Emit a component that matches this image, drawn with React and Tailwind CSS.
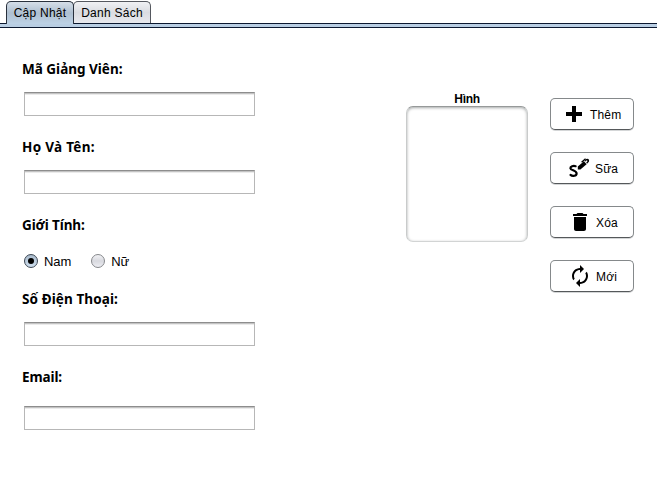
import React from "react";
import { MdDelete, MdAutorenew } from "react-icons/md";

const labelFont = "font-['Noto_Sans','Open_Sans',sans-serif]";

function Label({ children, className = "" }) {
  return (
    <div className={`h-5 whitespace-nowrap pl-[22px] text-[13.5px] leading-5 font-bold ${labelFont} ${className}`}>
      {children}
    </div>
  );
}

function TextField({ label, className = "" }) {
  return (
    <input
      type="text"
      aria-label={label}
      className={`ml-6 block h-6 w-[231px] border border-[#b7b7b7] border-t-[#8d8d8d] bg-white px-1.5 shadow-[inset_0_1px_0_#c3c3c3,inset_0_2px_0_#ebebeb] outline-none ${className}`}
    />
  );
}

function Radio({ checked, children, className = "" }) {
  return (
    <div className={`flex items-center ${className}`}>
      <span
        className={`flex size-[14px] items-center justify-center rounded-full border ${
          checked
            ? "border-[#3c4754] bg-linear-to-b from-[#a9bacb] to-[#cfdfef]"
            : "border-[#85878b] bg-linear-to-b from-[#f2f2f5] via-[#d8d9df] to-[#eeeef3]"
        }`}
      >
        {checked && <span className="size-[6px] rounded-full bg-black" />}
      </span>
      <span className="ml-1.5 pt-px text-[13px] leading-4 tracking-[-0.1px]">{children}</span>
    </div>
  );
}

function ActionButton({ icon, children, pad }) {
  return (
    <button
      type="button"
      className={`flex h-8 w-[84px] items-center rounded-[5px] border border-[#85898b] border-b-[#55585a] bg-white text-[12px] shadow-[0_1px_0_#d4d6d7] ${pad}`}
    >
      {icon}
      <span className="ml-1 pt-px tracking-[0.15px] whitespace-nowrap">{children}</span>
    </button>
  );
}

function Plus() {
  return (
    <svg viewBox="0 0 24 24" className="size-6 shrink-0">
      <path d="M10 4H14V10H20V14H14V20H10V14H4V10H10Z" />
    </svg>
  );
}

function SignPen() {
  return (
    <svg viewBox="0 0 24 24" className="size-6 shrink-0">
      <path
        d="M8.6 10.2C6.5 9.3 3.2 10.4 3.4 12.3C3.7 14.3 9.6 14.6 9.6 17.4C9.6 19.8 5.6 20.8 3.5 18.9"
        fill="none"
        stroke="black"
        strokeWidth="2.2"
        strokeLinecap="round"
      />
      <path d="M10.8 13.4V10.6L17 5.2L19.6 8.2L13.4 13.4Z" />
      <path d="M17.6 5L19.2 3.1Q20.2 2.2 21.4 3.1Q22.6 4.2 21.9 5.8L20 7.8L19.2 6.8L20.6 5L19.8 4.2L18.3 5.6Z" />
      <path d="M14.6 6.2L18.6 2.8" fill="none" stroke="black" strokeWidth="1.5" />
    </svg>
  );
}

export default function App() {
  return (
    <div className="h-[478px] w-[657px] overflow-hidden bg-white font-['Liberation_Sans',Arial,sans-serif] text-black">
      <div className="flex h-[23px] items-end pl-1.5 text-[12px] tracking-[0.25px]">
        <div className="z-10 -mb-px h-[23px] w-[68px] rounded-t-[5px] border border-b-0 border-[#28303c] bg-linear-to-b from-[#d5dee8] via-[#aebfd0] to-[#bdd2e6] pt-[3px] text-center leading-4 whitespace-nowrap">
          <span>Cập Nhật</span>
        </div>
        <div className="-ml-px h-[22px] w-[78px] rounded-t-[5px] border border-b-0 border-[#55585f] bg-linear-to-b from-[#f0f1f4] via-[#dadce1] to-[#e8e9ee] pt-[3px] text-center leading-4 whitespace-nowrap">
          Danh Sách
        </div>
      </div>
      <div className="h-[5px] border-y border-[#0b1830] bg-[#b9cee3]" />

      <div className="flex">
        <form className="w-[406px] pt-[31px]">
          <Label>Mã Giảng Viên:</Label>
          <TextField label="Mã Giảng Viên" className="mt-[13px]" />
          <Label className="mt-[21px]"><span className="tracking-[0.3px]">Họ Và Tên:</span></Label>
          <TextField label="Họ Và Tên" className="mt-[13px]" />
          <Label className="mt-[21px]"><span className="tracking-[-0.1px]">Giới Tính:</span></Label>
          <div className="mt-[18px] flex h-4 items-center pl-6">
            <Radio checked>Nam</Radio>
            <Radio className="ml-5">Nữ</Radio>
          </div>
          <Label className="mt-5"><span className="tracking-[0.1px]">Số Điện Thoại:</span></Label>
          <TextField label="Số Điện Thoại" className="mt-[13px]" />
          <Label className="mt-[21px]"><span className="tracking-[-0.1px]">Email:</span></Label>
          <TextField label="Email" className="mt-[19px]" />
        </form>

        <div className="w-[122px] pt-[63px]">
          <div className="h-[15px] pt-px text-center text-[12px] leading-[15px] font-bold tracking-[-0.3px]">Hình</div>
          <div className="h-[136px] rounded-[7px] border border-[#c9cbcb] border-t-[#969999] border-b-[#d2d4d4] shadow-[inset_0_1px_3px_#a6a9a9]" />
        </div>

        <div className="ml-[22px] flex flex-col gap-[22px] pt-[70px]">
          <ActionButton pad="pl-[11px]" icon={<Plus />}>Thêm</ActionButton>
          <ActionButton pad="pl-4" icon={<SignPen />}>Sữa</ActionButton>
          <ActionButton pad="pl-[17px]" icon={<MdDelete className="size-6 shrink-0" />}>Xóa</ActionButton>
          <ActionButton pad="pl-[17px]" icon={<MdAutorenew className="size-6 shrink-0" />}>Mới</ActionButton>
        </div>
      </div>
    </div>
  );
}
